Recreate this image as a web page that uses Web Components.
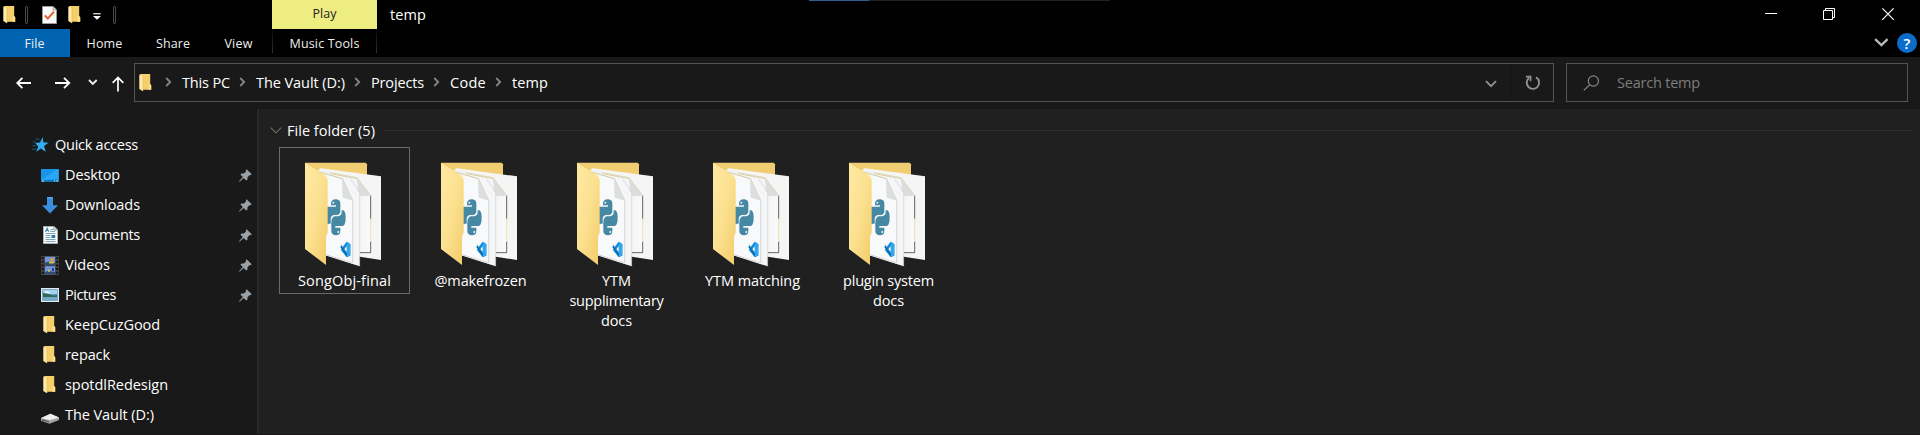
<!DOCTYPE html>
<html lang="en">
<head>
<meta charset="utf-8">
<title>temp</title>
<style>
html,body{margin:0;height:100%;background:#191919;overflow:hidden}
body{font-family:"Open Sans","Noto Sans",sans-serif;font-size:14.5px;color:#fff}
</style>
</head>
<body>
<explorer-window></explorer-window>
<script>
const component = (name, html, after) => customElements.define(name, class extends HTMLElement {
  constructor(){ super(); this.attachShadow({mode:'open'}); }
  connectedCallback(){
    const t = document.createElement('template');
    t.innerHTML = typeof html === 'function' ? html(this) : html;
    this.shadowRoot.replaceChildren(t.content.cloneNode(true));
    if (after) after(this);
  }
});

const ICONS = {
  folder: [13,18,`<path d="M1 0H11.2V10.4L12.2 11.5V15.7H3Z" fill="#f6cf6b"/><path d="M9.8 10h1.5l.9 1.5v4.2H9.2z" fill="#ffe08a"/><path d="M.3.6 4 2.2V17.2L.3 15Z" fill="#ffeaa6"/><path d="M4 2.2V17" stroke="#e3b757" stroke-width=".6"/>`],
  check: [15,18,`<path d="M.5.5H11L14.5 4V17.5H.5Z" fill="#fafafa" stroke="#9a9a9a"/><path d="M11 .5V4h3.5" fill="#ddd" stroke="#888" stroke-width=".7"/><path d="m2.8 9.3 3 3.3L12 5.7" fill="none" stroke="#e0602c" stroke-width="2"/>`],
  custom: [8,7,`<path d="M.2.7h7.5" stroke="#ddd" stroke-width="1.3"/><path d="M0 3h8L4 6.8z" fill="#fff"/>`],
  min: [12,14,`<path d="M0 6.5h12" stroke="#fff"/>`],
  max: [12,12,`<path d="M.5 2.5h9v9h-9zM2.5 2.5v-2h9v9h-2" fill="none" stroke="#fff"/>`],
  close: [12,12,`<path d="m.4.4 11.4 11.4M11.6.4.2 11.8" stroke="#fff" stroke-width="1.2"/>`],
  expand: [15,10,`<path d="m1.2 1.2 6.2 6 6.2-6" fill="none" stroke="#b9b9b9" stroke-width="2.3"/>`],
  back: [16,12,`<path d="M15 6H1.5M6.4.8 1.2 6l5.2 5.2" fill="none" stroke="#fff" stroke-width="1.8"/>`],
  fwd: [16,12,`<path d="M0 6h14M9 .8 14.3 6 9 11.2" fill="none" stroke="#fff" stroke-width="1.8"/>`],
  recent: [10,7,`<path d="m1 1 3.8 3.9L8.7 1" fill="none" stroke="#eee" stroke-width="1.9"/>`],
  up: [12,16,`<path d="M6 15.5V1.5M.7 6.8 6 1.4l5.3 5.4" fill="none" stroke="#fff" stroke-width="1.7"/>`],
  sep: [7,10,`<path d="m1.2 1 4 4-4 4" fill="none" stroke="#858585" stroke-width="1.8"/>`],
  drop: [12,8,`<path d="m1 1.2 5 5 5-5" fill="none" stroke="#929292" stroke-width="1.9"/>`],
  refresh: [16,16,`<path d="M4.2 2.7A6.2 6.2 0 1 0 11 2.3" fill="none" stroke="#929292" stroke-width="1.9"/><path d="M1 1.6h4.6v4.6" fill="none" stroke="#929292" stroke-width="1.6"/>`],
  search: [17,16,`<circle cx="10.4" cy="6" r="5.1" fill="none" stroke="#858585" stroke-width="1.2"/><path d="M6.8 9.6.8 15.4" stroke="#858585" stroke-width="1.3"/>`],
  group: [12,7,`<path d="m.7.7 5.2 5.1L11.2.7" fill="none" stroke="#707070" stroke-width="1.1"/>`],
  star: [18,16,`<path d="m10.8 0 .5 5.2 5.2.6-4.4 3.2 1.6 5.8-4.9-3.3L4.2 15l2-5.5L3.2 6l4.7-.6z" fill="#36aaf0"/><path d="M3.4 2.2h4M.6 5h3.4M.6 8.8h4M0 12.3h4" stroke="#155a88" stroke-width="1"/>`],
  desktop: [18,13,`<rect width="18" height="13" fill="#1795e8"/><path d="M1 11 15 1h2v9z" fill="#35b0fa" opacity=".7"/><path d="M0 11h18v2H0z" fill="#1173b9"/><path d="M1 12h2m10 0h1m1.4 0H17" stroke="#d9f1ff"/>`],
  down: [16,17,`<path d="M5 .2h6v8h5L8 16.6 0 8.2h5z" fill="#3b8ede"/><path d="M5 .2h6v1.2H5z" fill="#65aeee"/>`],
  doc: [15,18,`<path d="M.4.4h10.5l3.7 3.7v13.5H.4z" fill="#f7f9fa" stroke="#b7bbbd" stroke-width=".8"/><path d="M10.9.4v3.7h3.7" fill="#d5d9dc" stroke="#9aa"/><path d="m2.4 5.8 1.8-4 1.4 4M3 4.6h2" fill="none" stroke="#2c7fb0" stroke-width="1"/><path d="M7.2 3.6h3M7.2 5.5h5M2.5 7.5h10M2.5 9.5h5M2.5 11.5h5M2.5 13.5h10M2.5 15.5h10" stroke="#6a9fb8" stroke-width=".9"/><path d="M8.5 9h3.7v3H8.5z" fill="#3579a7"/>`],
  video: [18,19,`<path d="M0 0h18v19H0z" fill="#444"/><path d="M1.8 1v18M16.2 1v18" stroke="#151515" stroke-width="2.2" stroke-dasharray="2 1.7"/><path d="M4 .8h10V9H4zM4 10.3h10v7.9H4z" fill="#7196dd"/><path d="M4 7c3-2 7-1 10 0v2H4zM4 16c4-2 7 0 10 0v2.2H4z" fill="#314c78"/><path d="M8 5.6h5v2H8zM7 13.7h2v2H7z" fill="#d4c13d"/><circle cx="11" cy="3.8" r="1.8" fill="#dd9c41"/><path d="M11 12h2v3h-2z" fill="#223d80"/>`],
  picture: [18,14,`<path d="M.6.6h16.8v12.8H.6z" fill="#5898bf" stroke="#e4e9eb" stroke-width="1.3"/><path d="M2 2h14v4H2z" fill="#a4d1f0"/><path d="M2 5c5-1 7 4 14 2v2H2z" fill="#31695c"/><path d="M2 9.2h14V12H2z" fill="#76a9c4"/><path d="M3 5.2c2-3 5-2 6 0z" fill="#eef7fb"/>`],
  drive: [18,11,`<path d="M0 5 9.5.8 18 4.4V7L8.5 10.7 0 7.8z" fill="#a6a6a6"/><path d="M0 5 9.5.8 18 4.4 8.3 7.2z" fill="#efefef"/><path d="m1 6 7 2v1.6L1 7.4z" fill="#606060"/>`],
  pin: [13,13,`<path d="M7.6.3 12.7 5.3 11.5 6.3 10.7 6 8.5 8.3 8.4 10.7 7.3 11.5 4.7 8.9.5 12.7 0 12.3 3.8 8 1.4 5.5 2.5 4.6 5 4.5 7.2 2.2 6.7 1.3Z" fill="#9aa2a8"/>`]
};
component('win-icon', el => { const [w,h,art] = ICONS[el.getAttribute('name')];
  return `<style>:host{display:block;flex:none;width:${w}px;height:${h}px}svg{display:block}</style><svg width="${w}" height="${h}" viewBox="0 0 ${w} ${h}">${art}</svg>`; });

/* Folder with a Python file peeking out between its covers. */
component('folder-preview', `<style>:host{display:block;width:78px;height:106px}svg{display:block}</style>
<svg width="78" height="106" viewBox="147 156 234 318">
<defs>
<linearGradient id="c" x1="0" y1="0" x2="1" y2="1"><stop stop-color="#ffeaa4"/><stop offset=".5" stop-color="#fbe08f"/><stop offset="1" stop-color="#f3cc68"/></linearGradient>
<linearGradient id="p"><stop stop-color="#d7d8dc"/><stop offset=".6" stop-color="#f2f2f4"/><stop offset="1" stop-color="#f9f9f9"/></linearGradient>
</defs>
<path d="M150 158H332L336 163V300H150Z" fill="#efcd70"/>
<path d="M193 174 378 199V450L300 438Z" fill="#f5f5f6"/>
<path d="M193 180 306 203 347 257V429L300 425Z" fill="url(#p)"/>
<path d="M306 203 347 257 310 258Z" fill="#ddd"/>
<path d="M200 184 306 203 347 257" fill="none" stroke="#cdbf87" stroke-width="1.6"/>
<path d="M347 257V326M347 395V428H315" fill="none" stroke="#444" stroke-width="2.5"/><path d="M347 326V395" stroke="#ead68b" stroke-width="2"/>
<path d="M190 178 286 206 314 248V469L210 436Z" fill="#f5f6f7"/>
<path d="M286 206 314 248V469" fill="none" stroke="#c4c4c4" stroke-width="1.5"/>
<path d="M180 180 262 206 293 271V461L210 434Z" fill="#f8f9fa"/>
<path d="M190 185 262 206 293 271V459L214 434" fill="none" stroke="#aaa" stroke-width="1.3"/>
<path d="M262 207 293 271 264 262Z" fill="#dedede" stroke="#ccc"/>
<path d="m190 185 72 21M225 191l83 15" fill="none" stroke="#d7c989" stroke-width="2"/>
<path d="M228 279Q230 268 242 268Q256 269 256 280V303Q256 314 246 315H236Q228 316 227 328V341H216V290H243V286H228Z" fill="#4588a3"/>
<path d="M260 301H265Q272 306 272 322Q272 348 262 348H241V353H256V366Q254 376 242 376Q230 375 229 364V336Q230 321 240 319H248Q260 318 260 307Z" fill="#4588a3"/>
<circle cx="235" cy="278" r="3" fill="#e9f3f5"/><circle cx="250" cy="366" r="3" fill="#e9f3f5"/>
<path d="m275 395 11 7V437L275 441 258 421 264 414 275 428V408L264 424 258 417Z" fill="#158bd5"/><path d="m258 404 22 30-5 7-18-29z" fill="#0871bb"/><path d="m276 395 10 7v35l-10 4z" fill="#32a6ec"/>
<path d="M150 159 205 192Q218 200 218 214V368Q212 374 213 391V465L150 417Z" fill="url(#c)"/>
</svg>`);

component('quick-toolbar', `<style>:host{display:flex;align-items:center;height:29px;width:272px;padding-left:3px;box-sizing:border-box}
i{width:1px;height:16px;border:1px solid #484848;border-radius:1px}
i:nth-of-type(1){margin:0 14px 0 9px}.b{margin-left:11px}.c{margin:3px 12px 0 12px}</style>
<win-icon name="folder"></win-icon><i></i><win-icon name="check"></win-icon><win-icon class="b" name="folder"></win-icon><win-icon class="c" name="custom"></win-icon><i></i>`);

component('title-bar', `<style>
:host{display:flex;height:29px;background:#000;position:relative}
.play{width:105px;height:29px;background:#eeed82;color:#222;font-size:12.5px;line-height:27px;text-align:center}
.t{margin-left:13px;line-height:29px;flex:1}
.w{display:flex;align-items:center;gap:46px;margin-right:26px;height:28px}
.max{margin-right:1px}.progress{position:absolute;top:0;left:809px;width:301px;height:1px;background:linear-gradient(90deg,#315f91 60px,#222 60px)}
</style><quick-toolbar></quick-toolbar><div class="play"><x-label w="24">Play</x-label></div><div class="t"><x-label w="36">temp</x-label></div>
<div class="w"><win-icon name="min"></win-icon><win-icon class="max" name="max"></win-icon><win-icon name="close"></win-icon></div><div class="progress"></div>`);

component('ribbon-tabs', `<style>
:host{display:flex;height:28px;background:#000;font-size:12.5px;line-height:29px;text-align:center;color:#eee}
div{height:28px}.file{width:69px;padding-right:1px;background:#0063b1}.home{width:69px}.share{width:68px}.view{width:63px;padding-right:2px}
.music{width:103px;height:24px;border:solid;border-width:0 1px;border-image:linear-gradient(#080808,#333) 1}
.gap{flex:1}.end{display:flex;align-items:center;gap:8px;margin-right:3px}
.help{width:20px;height:20px;border-radius:50%;background:#0b6dca;font:600 15px/20px "Open Sans",sans-serif;color:#fff}
</style><div class="file"><x-label w="20">File</x-label></div><div class="home"><x-label w="36">Home</x-label></div><div class="share"><x-label w="34">Share</x-label></div><div class="view"><x-label w="28">View</x-label></div><div class="music"><x-label w="70">Music Tools</x-label></div><div class="gap"></div><div class="end"><win-icon name="expand"></win-icon><span class="help">?</span></div>`);

component('path-bar', `<style>
:host{display:flex;align-items:center;box-sizing:border-box;width:1420px;height:39px;border:1px solid #535353;padding-left:4px}
.f{margin-right:13px}.s{margin:-2px 10px 0 9px}.s.first{margin-left:0}.gap{flex:1}
.r{display:flex;align-items:center;justify-content:center;width:41px;height:37px;border-left:1px solid #151515}
.d{margin-right:14px;margin-top:3px}x-label{margin-top:-1px}
</style><win-icon class="f" name="folder"></win-icon><win-icon class="s first" name="sep"></win-icon><x-label w="48">This PC</x-label><win-icon class="s" name="sep"></win-icon><x-label w="89">The Vault (D:)</x-label><win-icon class="s" name="sep"></win-icon><x-label w="53">Projects</x-label><win-icon class="s" name="sep"></win-icon><x-label w="36">Code</x-label><win-icon class="s" name="sep"></win-icon><x-label w="36">temp</x-label><div class="gap"></div><win-icon class="d" name="drop"></win-icon><div class="r"><win-icon name="refresh"></win-icon></div>`);

component('search-box', `<style>:host{display:flex;align-items:center;box-sizing:border-box;width:342px;height:39px;border:1px solid #535353;padding-left:16px;color:#7d7d7d}
win-icon{margin-right:17px}x-label{margin-top:-1px}</style><win-icon name="search"></win-icon><x-label w="83">Search temp</x-label>`);

component('navigation-bar', `<style>:host{display:flex;align-items:center;height:52px;background:#191919;box-sizing:border-box;padding:0 12px 1px 16px}
.n{display:flex;align-items:center;width:118px}.a{margin-left:23px}.b{margin-left:17px}.c{margin-left:14px;margin-top:2px}search-box{margin-left:12px}</style>
<div class="n"><win-icon name="back"></win-icon><win-icon class="a" name="fwd"></win-icon><win-icon class="b" name="recent"></win-icon><win-icon class="c" name="up"></win-icon></div><path-bar></path-bar><search-box></search-box>`);

component('nav-item', el => `<style>
:host{display:flex;align-items:center;height:30px;padding-left:41px}
:host([root]){padding-left:32px}
.i{width:24px;display:flex}:host([root]) .i{width:23px}
.p{flex:1;display:flex;justify-content:flex-end;padding-right:5px}
.folder,.doc{padding-left:2px;width:22px}.down{padding-left:1px;width:23px}.drive{padding-top:6px}
x-label{margin-top:-1px}
</style><div class="i ${el.getAttribute('icon')}"><win-icon name="${el.getAttribute('icon')}"></win-icon></div><x-label w="${el.getAttribute('w')}">${el.getAttribute('label')}</x-label>${el.hasAttribute('pinned')?'<div class="p"><win-icon name="pin"></win-icon></div>':''}`);

component('side-nav', `<style>:host{display:block;box-sizing:border-box;width:259px;padding-top:21px;background:#191919;border-right:2px solid #292929}</style>
<nav-item root icon="star" label="Quick access" w="83"></nav-item>
<nav-item icon="desktop" label="Desktop" w="55" pinned></nav-item>
<nav-item icon="down" label="Downloads" w="75" pinned></nav-item>
<nav-item icon="doc" label="Documents" w="75" pinned></nav-item>
<nav-item icon="video" label="Videos" w="45" pinned></nav-item>
<nav-item icon="picture" label="Pictures" w="51" pinned></nav-item>
<nav-item icon="folder" label="KeepCuzGood" w="95"></nav-item>
<nav-item icon="folder" label="repack" w="45"></nav-item>
<nav-item icon="folder" label="spotdlRedesign" w="103"></nav-item>
<nav-item icon="drive" label="The Vault (D:)" w="89"></nav-item>`);

component('file-tile', `<style>
:host{display:block;box-sizing:border-box;width:131px;height:147px;border:1px solid transparent;padding-top:14px}
:host([selected]){border-color:#6a6a6a}
folder-preview{margin-left:24px}
.l{display:flex;flex-direction:column;align-items:center;line-height:20px;margin-top:3px}
</style><folder-preview></folder-preview><div class="l"><slot></slot></div>`);

component('file-view', `<style>:host{display:block;flex:1;background:#202020;box-sizing:border-box;padding:10px 8px 0 11px}
.h{display:flex;align-items:center;height:22px}.h win-icon{margin-right:5px}.h hr{flex:1;height:1px;border:0;background:#303030;margin:1px 0 0 9px}
.g{display:flex;gap:5px;margin:6px 0 0 9px}</style>
<div class="h"><win-icon name="group"></win-icon><x-label w="88">File folder (5)</x-label><hr></div>
<div class="g"><file-tile selected><x-label w="93">SongObj-final</x-label></file-tile>
<file-tile><x-label w="92">@makefrozen</x-label></file-tile>
<file-tile><x-label w="29">YTM</x-label><x-label w="94">supplimentary</x-label><x-label w="31">docs</x-label></file-tile>
<file-tile><x-label w="95">YTM matching</x-label></file-tile>
<file-tile><x-label w="91">plugin system</x-label><x-label w="31">docs</x-label></file-tile></div>`);

component('explorer-window', `<style>:host{display:flex;flex-direction:column;box-sizing:border-box;width:1920px;height:435px;background:#191919;border-bottom:1px solid #1e1318}.m{display:flex;flex:1;min-height:0}</style>
<title-bar></title-bar><ribbon-tabs></ribbon-tabs><navigation-bar></navigation-bar><div class="m"><side-nav></side-nav><file-view></file-view></div>`);

/* Registered last: its width can only be measured once every parent is laid out. */
component('x-label', `<style>:host{display:inline-block;white-space:nowrap}span{display:inline-block}</style><span><slot></slot></span>`, el => {
  const s = el.shadowRoot.querySelector('span'), n = el.textContent.length;
  s.style.letterSpacing = ((+el.getAttribute('w') - s.getBoundingClientRect().width) / n).toFixed(3) + 'px';
});
</script>
</body>
</html>
